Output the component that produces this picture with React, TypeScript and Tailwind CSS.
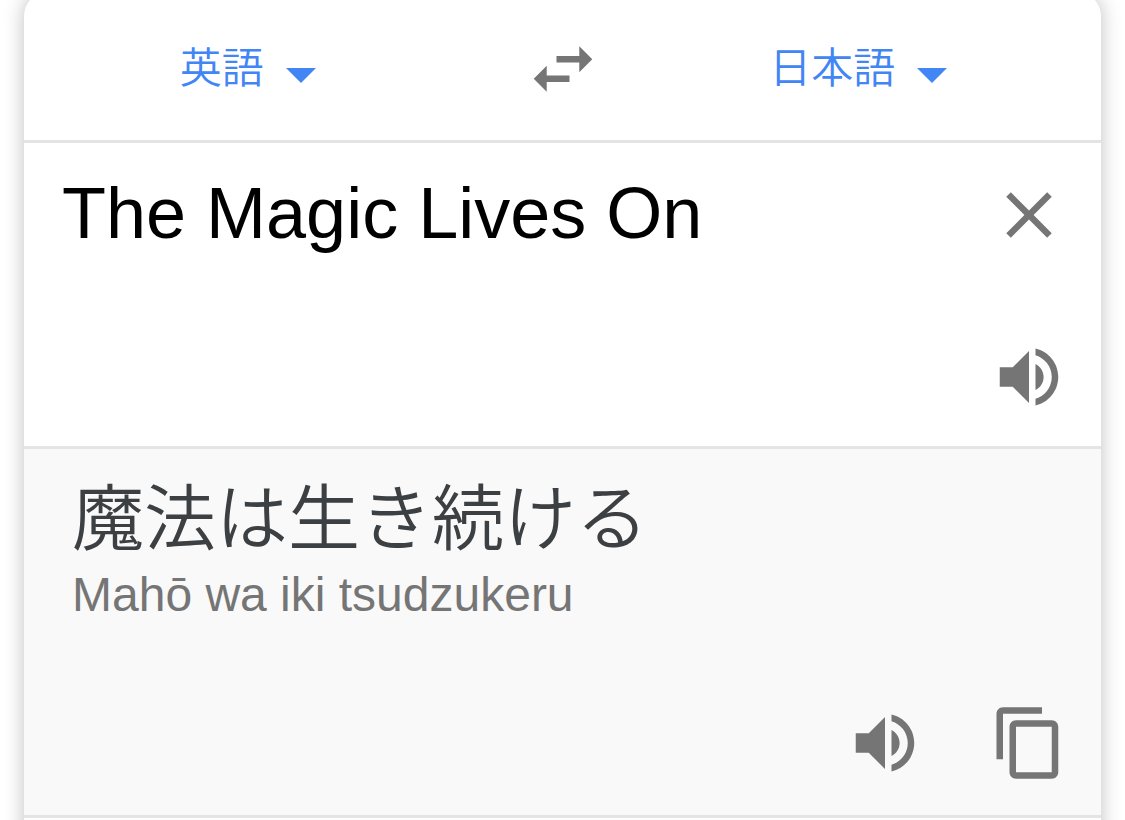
import { useState } from "react";

type IconProps = { path: string };

const ICONS = {
  swap: "M6.99 11L3 15l3.99 4v-3H14v-2H6.99v-3zM21 9l-3.99-4v3H10v2h7.01v3L21 9z",
  close:
    "M19 6.41L17.59 5 12 10.59 6.41 5 5 6.41 10.59 12 5 17.59 6.41 19 12 13.41 17.59 19 19 17.59 13.41 12z",
  speaker:
    "M3 9v6h4l5 5V4L7 9H3zm13.5 3c0-1.77-1.02-3.29-2.5-4.03v8.05c1.48-.73 2.5-2.25 2.5-4.02zM14 3.23v2.06c2.89.86 5 3.54 5 6.71s-2.11 5.85-5 6.71v2.06c4.01-.91 7-4.49 7-8.77s-2.99-7.86-7-8.77z",
  copy: "M16 1H4c-1.1 0-2 .9-2 2v14h2V3h12V1zm3 4H8c-1.1 0-2 .9-2 2v14c0 1.1.9 2 2 2h11c1.1 0 2-.9 2-2V7c0-1.1-.9-2-2-2zm0 16H8V7h11v14z",
};

function Icon({ path }: IconProps) {
  return (
    <svg viewBox="0 0 24 24" className="block size-[78px]" fill="currentColor" aria-hidden="true">
      <path d={path} />
    </svg>
  );
}

function IconButton({ label, path, onClick }: { label: string; path: string; onClick?: () => void }) {
  return (
    <button type="button" aria-label={label} onClick={onClick} className="shrink-0 cursor-pointer text-[#757575]">
      <Icon path={path} />
    </button>
  );
}

function LanguageSelect({
  label,
  value,
  onChange,
}: {
  label: string;
  value: string;
  onChange: (value: string) => void;
}) {
  return (
    <label className="flex items-center gap-[22px] text-[#4285f4]">
      <select
        aria-label={label}
        value={value}
        onChange={(e) => onChange(e.target.value)}
        className="h-16 cursor-pointer appearance-none bg-transparent text-[42px] leading-[64px] font-[350] outline-none [field-sizing:content]"
      >
        <option>英語</option>
        <option>日本語</option>
      </select>
      <svg viewBox="0 0 30 15" className="mt-3 h-[15px] w-[30px]" fill="currentColor" aria-hidden="true">
        <path d="M0 0h30L15 15z" />
      </svg>
    </label>
  );
}

export default function App() {
  const [source, setSource] = useState("英語");
  const [target, setTarget] = useState("日本語");
  const [text, setText] = useState("The Magic Lives On");

  const swap = () => {
    setSource(target);
    setTarget(source);
  };

  return (
    <div className="h-screen overflow-hidden bg-white px-6 font-['Liberation_Sans','Noto_Sans_CJK_JP',sans-serif]">
      <main className="-mt-2 min-h-[calc(100vh+48px)] rounded-3xl bg-white shadow-[0_0_20px_rgba(0,0,0,0.25)]">
        <header className="grid h-[151px] grid-cols-[1fr_auto_1fr] items-center border-b-[3px] border-[#e4e4e4] pt-1.5">
          <div className="flex justify-center pr-[52px]">
            <LanguageSelect label="翻訳元の言語" value={source} onChange={setSource} />
          </div>
          <IconButton label="言語を入れ替える" path={ICONS.swap} onClick={swap} />
          <div className="flex justify-center pl-3.5">
            <LanguageSelect label="翻訳先の言語" value={target} onChange={setTarget} />
          </div>
        </header>

        <section className="border-b-[3px] border-[#e4e4e4] pt-[33px] pr-[33px] pb-[30px] pl-[38px]">
          <div className="flex items-start">
            <textarea
              aria-label="原文"
              rows={1}
              value={text}
              onChange={(e) => setText(e.target.value)}
              className="h-[162px] min-w-0 flex-1 resize-none bg-transparent text-[72px] leading-[74px] text-black outline-none"
            />
            <IconButton label="原文を消去" path={ICONS.close} onClick={() => setText("")} />
          </div>
          <div className="flex justify-end">
            <IconButton label="原文を聞く" path={ICONS.speaker} />
          </div>
        </section>

        <section className="border-b-[3px] border-[#e4e4e4] bg-[#f9f9f9] pt-6 pr-[33px] pb-[33px] pl-12">
          <p lang="ja" className="text-[72px] leading-[92px] font-[350] text-[#3c4043]">
            魔法は生き続ける
          </p>
          <p className="text-[48px] leading-[60px] text-[#757575]">Mahō wa iki tsudzukeru</p>
          <div className="mt-[79px] flex justify-end gap-[66px]">
            <IconButton label="翻訳を聞く" path={ICONS.speaker} />
            <IconButton label="翻訳をコピー" path={ICONS.copy} />
          </div>
        </section>
      </main>
    </div>
  );
}
